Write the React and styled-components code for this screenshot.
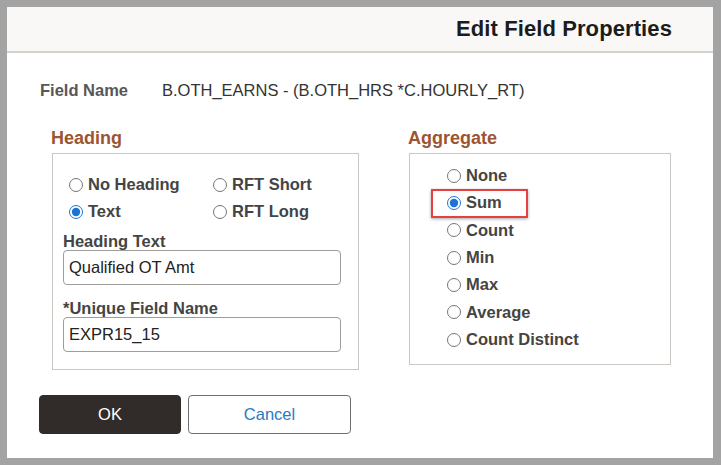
import React from "react";
import styled, { createGlobalStyle } from "styled-components";

const GlobalStyle = createGlobalStyle`
  html, body {
    margin: 0;
    padding: 0;
    background: #a3a3a3;
  }
  body {
    font-family: "Liberation Sans", Arial, sans-serif;
  }
`;

const Frame = styled.div`
  box-sizing: border-box;
  width: 721px;
  height: 465px;
  padding: 7px 8px 7px 7px;
`;

const Dialog = styled.div`
  width: 706px;
  height: 451px;
  background: #ffffff;
  display: flex;
  flex-direction: column;
`;

const Header = styled.header`
  height: 44px;
  background: #f9f8f6;
  border-bottom: 2px solid #d4d0cc;
  display: flex;
  align-items: center;
  justify-content: flex-end;
  padding-right: 41px;
`;

const Title = styled.h1`
  margin: 0;
  font-size: 22px;
  font-weight: bold;
  color: #1c1c1c;
  letter-spacing: 0.1px;
`;

const Body = styled.div`
  padding: 27px 0 0 33px;
  display: flex;
  flex-direction: column;
`;

const FieldRow = styled.div`
  display: flex;
  align-items: center;
  height: 20px;
  font-size: 16.5px;
`;

const FieldLabel = styled.span`
  width: 122px;
  font-weight: bold;
  color: #575757;
`;

const FieldValue = styled.span`
  color: #333333;
`;

const Sections = styled.div`
  display: flex;
  gap: 50px;
  margin: 28px 0 0 12px;
`;

const Group = styled.div`
  display: flex;
  flex-direction: column;
`;

const Legend = styled.div`
  font-size: 18px;
  line-height: 20px;
  font-weight: bold;
  color: #9d5430;
  margin: 0 0 5px -1px;
`;

const Box = styled.div`
  box-sizing: border-box;
  width: ${(p) => p.$w}px;
  height: ${(p) => p.$h}px;
  border: 1px solid #cbc6c1;
  padding: ${(p) => p.$pad};
`;

const RadioGrid = styled.div`
  display: grid;
  grid-template-columns: 144px auto;
  padding-left: 6px;
`;

const RadioList = styled.div`
  display: flex;
  flex-direction: column;
`;

const RadioRow = styled.label`
  position: relative;
  display: flex;
  align-items: center;
  gap: 5px;
  height: ${(p) => p.$h}px;
  font-size: 16.5px;
  font-weight: bold;
  color: #444444;
`;

const Radio = styled.input.attrs({ type: "radio" })`
  margin: 0;
  width: 14px;
  height: 14px;
  accent-color: #1b74d4;
`;

const Highlight = styled.span`
  position: absolute;
  left: -16px;
  top: 0;
  width: 97px;
  height: 29px;
  box-sizing: border-box;
  border: 2px solid #e8403f;
  box-shadow: 0 1px 3px rgba(0, 0, 0, 0.35);
  pointer-events: none;
`;

const InputLabel = styled.div`
  font-size: 16.5px;
  line-height: 17px;
  font-weight: bold;
  color: #444444;
  margin-top: ${(p) => p.$mt}px;
`;

const TextInput = styled.input`
  box-sizing: border-box;
  display: block;
  width: 278px;
  height: 35px;
  border: 1px solid #a09c98;
  border-radius: 4px;
  padding: 0 5px;
  font-family: "Liberation Sans", Arial, sans-serif;
  font-size: 16.5px;
  color: #222222;
  outline: none;
`;

const Buttons = styled.div`
  display: flex;
  gap: 7px;
  margin: 25px 0 0 -1px;
`;

const Button = styled.button`
  box-sizing: border-box;
  width: ${(p) => p.$w}px;
  height: 39px;
  border-radius: 4px;
  font-family: "Liberation Sans", Arial, sans-serif;
  font-size: 16.5px;
  cursor: pointer;
  background: ${(p) => (p.$primary ? "#312c29" : "#ffffff")};
  color: ${(p) => (p.$primary ? "#ffffff" : "#2b7ac2")};
  border: 1px solid ${(p) => (p.$primary ? "#312c29" : "#6f6f6f")};
`;

const headingOptions = [
  { label: "No Heading", checked: false },
  { label: "RFT Short", checked: false },
  { label: "Text", checked: true },
  { label: "RFT Long", checked: false },
];

const aggregateOptions = ["None", "Sum", "Count", "Min", "Max", "Average", "Count Distinct"];

export default function App() {
  return (
    <>
      <GlobalStyle />
      <Frame>
        <Dialog>
          <Header>
            <Title>Edit Field Properties</Title>
          </Header>
          <Body>
            <FieldRow>
              <FieldLabel>Field Name</FieldLabel>
              <FieldValue>B.OTH_EARNS - (B.OTH_HRS *C.HOURLY_RT)</FieldValue>
            </FieldRow>

            <Sections>
              <Group>
                <Legend>Heading</Legend>
                <Box $w={307} $h={217} $pad="17px 0 0 10px">
                  <RadioGrid>
                    {headingOptions.map((o) => (
                      <RadioRow key={o.label} $h={27}>
                        <Radio name="heading" defaultChecked={o.checked} />
                        {o.label}
                      </RadioRow>
                    ))}
                  </RadioGrid>
                  <InputLabel $mt={8}>Heading Text</InputLabel>
                  <TextInput defaultValue="Qualified OT Amt" />
                  <InputLabel $mt={15}>*Unique Field Name</InputLabel>
                  <TextInput defaultValue="EXPR15_15" />
                </Box>
              </Group>

              <Group>
                <Legend>Aggregate</Legend>
                <Box $w={262} $h={212} $pad="8px 0 0 37px">
                  <RadioList>
                    {aggregateOptions.map((o) => (
                      <RadioRow key={o} $h={27.33}>
                        <Radio name="aggregate" defaultChecked={o === "Sum"} />
                        {o}
                        {o === "Sum" && <Highlight />}
                      </RadioRow>
                    ))}
                  </RadioList>
                </Box>
              </Group>
            </Sections>

            <Buttons>
              <Button $primary $w={142}>OK</Button>
              <Button $w={163}>Cancel</Button>
            </Buttons>
          </Body>
        </Dialog>
      </Frame>
    </>
  );
}
